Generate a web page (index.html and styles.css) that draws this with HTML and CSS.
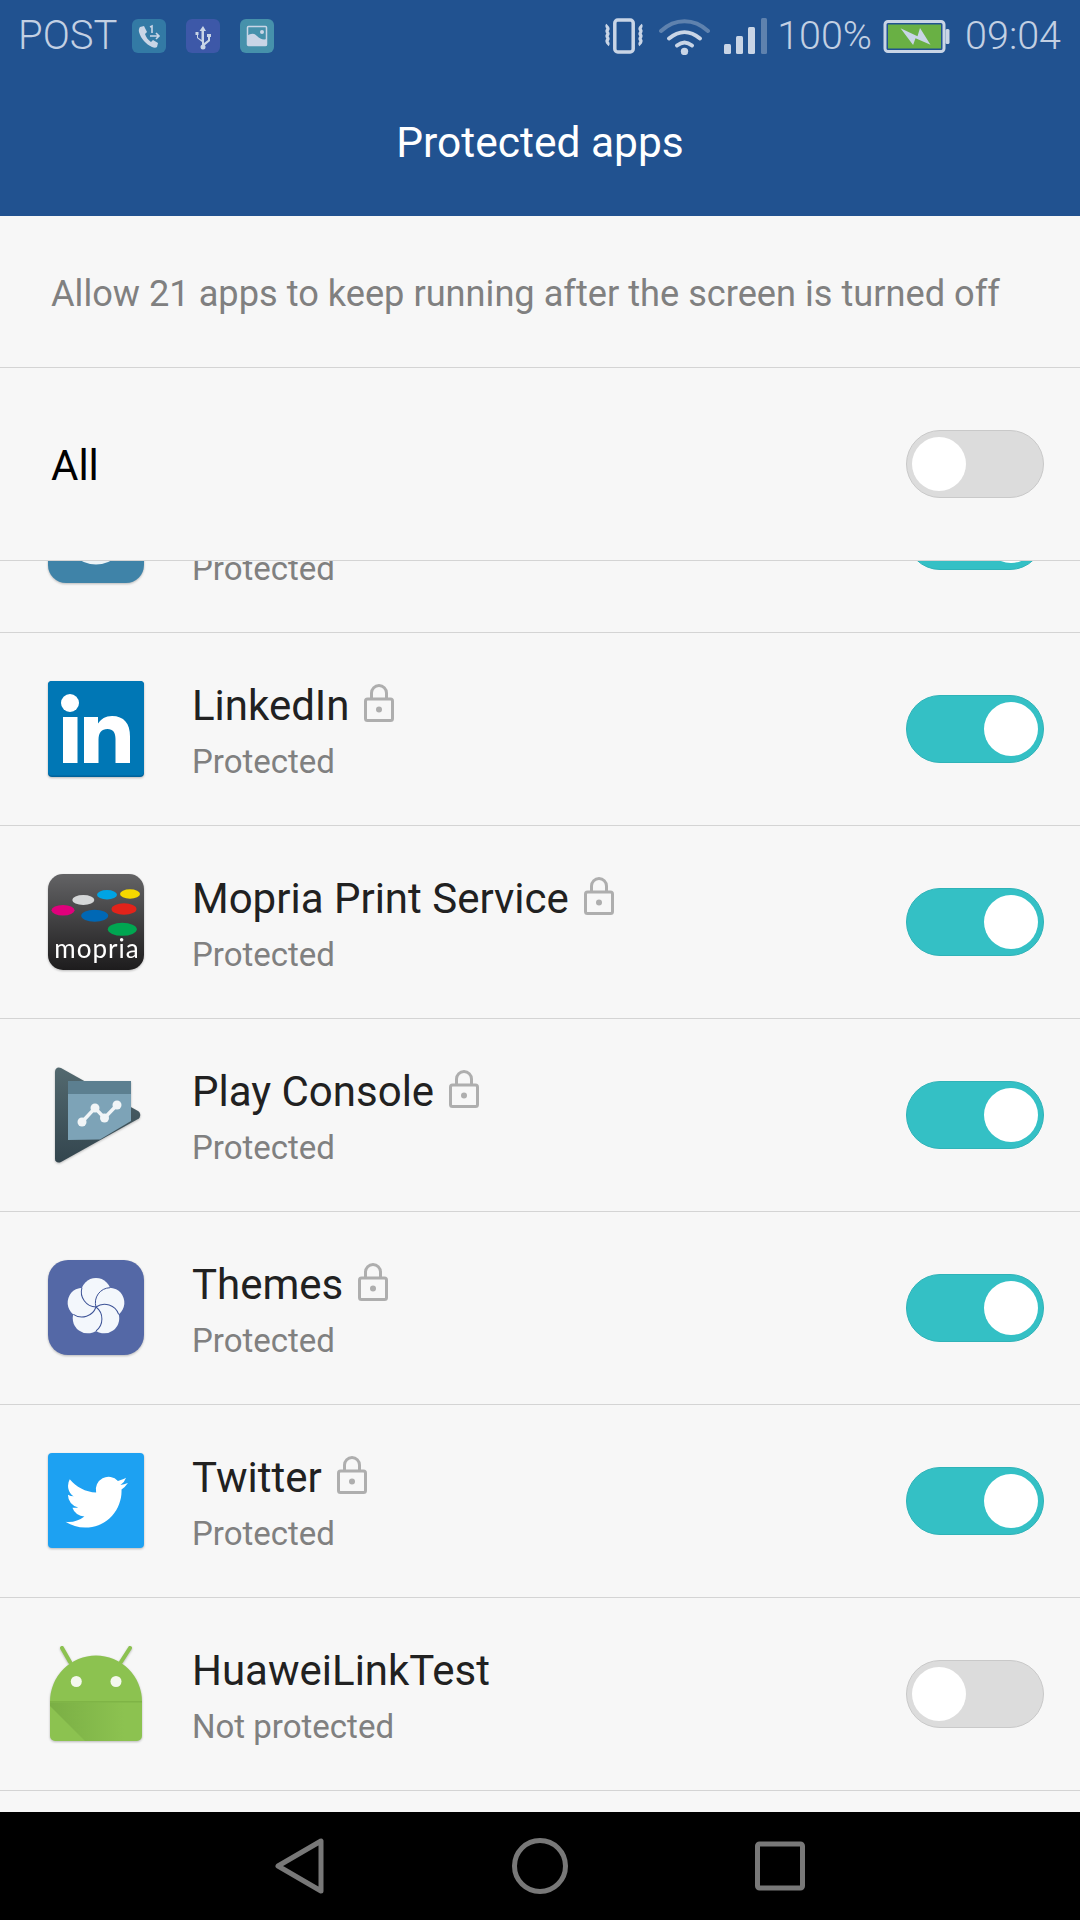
FILE: index.html
```html
<!DOCTYPE html>
<html lang="en">
<head>
    <meta charset="utf-8">
    <title>Protected apps</title>
    <link rel="stylesheet" href="styles.css">
</head>
<body>
<svg class="defs" width="0" height="0">
    <symbol id="lock" viewBox="0 0 30 38">
        <path d="M7.500 15V9a7.500 7.500 0 0 1 15 0v6" fill="none" stroke="#aeaeae" stroke-width="3"/>
        <rect x="1.500" y="15" width="27" height="21.500" rx="2" fill="none" stroke="#aeaeae" stroke-width="3"/>
        <circle cx="15" cy="25.500" r="3" fill="#aeaeae"/>
    </symbol>
</svg>

<div class="phone">
    <header class="header">
        <div class="statusbar">
            <div class="status-left">
                <span class="status-text">POST</span>
                <span class="tile tile-phone">
                    <svg width="34" height="34" viewBox="0 0 34 34">
                        <path d="M8 8l4-1 3 6-2 2c1 3 3 6 6 8l2-2 5 3-1 4c-1 1-3 1-5 0-6-3-11-8-13-15-.4-2 0-4 1-5z" fill="#c9d5e6"/>
                        <path d="M18 8l2-1v7M18 17h9M24 14l3 3-3 3" fill="none" stroke="#c9d5e6" stroke-width="1.600"/>
                    </svg>
                </span>
                <span class="tile tile-usb">
                    <svg width="34" height="34" viewBox="0 0 34 34">
                        <path d="M17 7l3 5h-2v12l4-3v-3h-1v-3h4v3h-1v4l-6 5v2h-2v-6l-5-4v-3h-1.500v-3h3v3h-.5v2.500l3.500 2.500V12h-2z" fill="#c9d5e6"/>
                        <circle cx="17" cy="28" r="2.500" fill="#c9d5e6"/>
                    </svg>
                </span>
                <span class="tile tile-image">
                    <svg width="34" height="34" viewBox="0 0 34 34">
                        <rect x="7.500" y="7.500" width="19" height="19" rx="1" fill="none" stroke="#c9d5e6" stroke-width="1.500"/>
                        <path d="M7 26V17c4-3 7-3 10 0s6 4 10 3v6.500z" fill="#c9d5e6"/>
                        <circle cx="22" cy="13" r="2" fill="#c9d5e6"/>
                    </svg>
                </span>
            </div>
            <div class="status-right">
                <svg class="st-vibrate" width="40" height="36" viewBox="0 0 40 36">
                    <rect x="10.800" y="2" width="18.400" height="32" rx="3" fill="none" stroke="#c9d5e6" stroke-width="3.500"/>
                    <path d="M3.500 7c-2 2 2 3 0 5s2 3 0 5 2 3 0 5 2 3 0 5M36.500 7c2 2-2 3 0 5s-2 3 0 5-2 3 0 5 -2 3 0 5" fill="none" stroke="#c9d5e6" stroke-width="3.200"/>
                </svg>
                <svg class="st-wifi" width="51" height="37" viewBox="0 0 51 37">
                    <path d="M2 13C16 0 35 0 49 13" fill="none" stroke="#5f82ae" stroke-width="4" stroke-linecap="round"/>
                    <path d="M10 20.500c10-8.500 21-8.500 31 0M18 27.500c5-4 10-4 15 0" fill="none" stroke="#c9d5e6" stroke-width="4" stroke-linecap="round"/>
                    <circle cx="25.500" cy="33.500" r="3.700" fill="#c9d5e6"/>
                </svg>
                <svg class="st-signal" width="43" height="37" viewBox="0 0 43 37">
                    <rect x="0" y="26" width="7" height="10" rx="1.500" fill="#c9d5e6"/>
                    <rect x="12" y="18" width="7" height="18" rx="1.500" fill="#c9d5e6"/>
                    <rect x="24" y="9" width="7" height="27" rx="1.500" fill="#c9d5e6"/>
                    <rect x="37" y="0" width="6" height="36" rx="1.500" fill="#5f82ae"/>
                </svg>
                <span class="status-text st-percent">100%</span>
                <svg class="st-battery" width="67" height="33" viewBox="0 0 66 33">
                    <rect x="1.500" y="1.500" width="59" height="30" rx="3" fill="#215290" stroke="#c9d5e6" stroke-width="3"/>
                    <rect x="4.500" y="4.500" width="53" height="24" fill="#69b044"/>
                    <rect x="62" y="9" width="4" height="15" rx="1.500" fill="#c9d5e6"/>
                    <path d="M17 8.300l17 8 2.500-8.300L47 24.700l-15-6.400-2.400 6.700z" fill="#c9d5e6"/>
                </svg>
                <span class="status-text st-time">09:04</span>
            </div>
        </div>
        <h1 class="title">Protected apps</h1>
    </header>

    <p class="intro">Allow 21 apps to keep running after the screen is turned off</p>

    <div class="all-row">
        <span class="all-label">All</span>
        <span class="toggle"></span>
    </div>

    <div class="list">
        <!-- scrolled up, only the bottom of this row shows -->
        <div class="row row-scrolled">
            <svg class="app-icon" viewBox="0 0 96 96">
                <rect width="96" height="95" rx="18" fill="#3f83a8"/>
                <circle cx="48" cy="46" r="28" fill="#2c3e46" stroke="#eef4f7" stroke-width="5"/>
            </svg>
            <div class="app-text">
                <div class="app-name">&nbsp;</div>
                <div class="app-status">Protected</div>
            </div>
            <span class="toggle toggle-on"></span>
        </div>

        <div class="row">
            <svg class="app-icon" viewBox="0 0 96 96">
                <rect width="96" height="96" rx="4" fill="#00629a"/>
                <rect width="96" height="94.500" rx="4" fill="#0077b5"/>
                <circle cx="22" cy="22" r="9" fill="#fff"/>
                <rect x="15" y="36" width="14.500" height="46" fill="#fff"/>
                <path d="M36 36h14v6.500c3-4.500 7.500-7.500 14-7.500 12 0 18 7.500 18 20.500V82H67.500V58c0-6.500-2.500-10-8-10-6 0-9 4-9 10.500V82H36z" fill="#fff"/>
            </svg>
            <div class="app-text">
                <div class="app-name">LinkedIn<svg class="lock"><use href="#lock"/></svg></div>
                <div class="app-status">Protected</div>
            </div>
            <span class="toggle toggle-on"></span>
        </div>

        <div class="row">
            <svg class="app-icon" viewBox="0 0 96 96">
                <defs>
                    <linearGradient id="mop" x1="0" y1="0" x2="0" y2="1">
                        <stop offset="0" stop-color="#636365"/>
                        <stop offset="1" stop-color="#1d1c1d"/>
                    </linearGradient>
                </defs>
                <rect width="96" height="96" rx="15" fill="url(#mop)"/>
                <ellipse cx="35.300" cy="26" rx="11" ry="5" fill="#d5d7d8"/>
                <ellipse cx="59" cy="20.700" rx="10" ry="4.700" fill="#00a4e4"/>
                <ellipse cx="82" cy="20" rx="10" ry="4.700" fill="#f5d800"/>
                <ellipse cx="15" cy="36.300" rx="11.500" ry="5.200" fill="#e0007c"/>
                <ellipse cx="76" cy="35" rx="12.500" ry="5.700" fill="#e2231a"/>
                <ellipse cx="46.700" cy="41.700" rx="13.500" ry="6" fill="#0068b5"/>
                <ellipse cx="74.300" cy="55.300" rx="14.500" ry="6.500" fill="#00a651"/>
                <text class="mopria-text" x="49" y="84" text-anchor="middle">mopria</text>
            </svg>
            <div class="app-text">
                <div class="app-name">Mopria Print Service<svg class="lock"><use href="#lock"/></svg></div>
                <div class="app-status">Protected</div>
            </div>
            <span class="toggle toggle-on"></span>
        </div>

        <div class="row">
            <svg class="app-icon" viewBox="0 0 96 96">
                <defs>
                    <linearGradient id="play" x1="0" y1="0" x2="0" y2="1">
                        <stop offset="0" stop-color="#53696f"/>
                        <stop offset="1" stop-color="#33454e"/>
                    </linearGradient>
                </defs>
                <path d="M7 5c0-4 3-5.500 6-4L90 44c3 2 3 6 0 8L13 95c-3 1.500-6 0-6-3z" fill="url(#play)"/>
                <path d="M20 27H83V54L52 72.500 20 73z" fill="#7da3b7"/>
                <rect x="20" y="14" width="63" height="13" fill="#5c7f90"/>
                <path d="M34 55l13-14 9.500 10L69 38" fill="none" stroke="#f1f5f7" stroke-width="3.500"/>
                <g fill="#f1f5f7">
                    <circle cx="34" cy="55" r="4.500"/>
                    <circle cx="47" cy="41" r="4.500"/>
                    <circle cx="56.500" cy="51" r="4.500"/>
                    <circle cx="69" cy="38" r="4.500"/>
                </g>
            </svg>
            <div class="app-text">
                <div class="app-name">Play Console<svg class="lock"><use href="#lock"/></svg></div>
                <div class="app-status">Protected</div>
            </div>
            <span class="toggle toggle-on"></span>
        </div>

        <div class="row">
            <svg class="app-icon" viewBox="0 0 96 96">
                <rect width="96" height="95" rx="20" fill="#5468a6"/>
                <g transform="translate(48 47)">
                    <g fill="#f3f7fc">
                        <circle cy="-14" r="15"/>
                        <circle cy="-14" r="15" transform="rotate(72)"/>
                        <circle cy="-14" r="15" transform="rotate(144)"/>
                        <circle cy="-14" r="15" transform="rotate(216)"/>
                        <circle cy="-14" r="15" transform="rotate(288)"/>
                    </g>
                    <g fill="none" stroke="#3c5296" stroke-width="1">
                        <path d="M0 0A15 15 0 0 1 14-19.300"/>
                        <path d="M0 0A15 15 0 0 1 14-19.300" transform="rotate(72)"/>
                        <path d="M0 0A15 15 0 0 1 14-19.300" transform="rotate(144)"/>
                        <path d="M0 0A15 15 0 0 1 14-19.300" transform="rotate(216)"/>
                        <path d="M0 0A15 15 0 0 1 14-19.300" transform="rotate(288)"/>
                    </g>
                </g>
            </svg>
            <div class="app-text">
                <div class="app-name">Themes<svg class="lock"><use href="#lock"/></svg></div>
                <div class="app-status">Protected</div>
            </div>
            <span class="toggle toggle-on"></span>
        </div>

        <div class="row">
            <svg class="app-icon" viewBox="0 0 96 96">
                <rect width="96" height="95" rx="4" fill="#1da1f2"/>
                <path transform="translate(17.500 18) scale(2.6)" d="M23.953 4.570a10 10 0 0 1-2.825.775 4.958 4.958 0 0 0 2.163-2.723c-.951.555-2.005.959-3.127 1.184a4.920 4.920 0 0 0-8.384 4.482C7.690 8.095 4.067 6.130 1.640 3.162a4.822 4.822 0 0 0-.666 2.475c0 1.710.870 3.213 2.188 4.096a4.904 4.904 0 0 1-2.228-.616v.060a4.923 4.923 0 0 0 3.946 4.827 4.996 4.996 0 0 1-2.212.085 4.936 4.936 0 0 0 4.604 3.417 9.867 9.867 0 0 1-6.102 2.105c-.390 0-.779-.023-1.170-.067a13.995 13.995 0 0 0 7.557 2.209c9.053 0 13.998-7.496 13.998-13.985 0-.210 0-.420-.015-.630A9.935 9.935 0 0 0 24 4.590z" fill="#fff"/>
            </svg>
            <div class="app-text">
                <div class="app-name">Twitter<svg class="lock"><use href="#lock"/></svg></div>
                <div class="app-status">Protected</div>
            </div>
            <span class="toggle toggle-on"></span>
        </div>

        <div class="row">
            <svg class="app-icon" viewBox="0 0 96 96">
                <defs>
                    <linearGradient id="fold" x1="0" y1="0" x2="1" y2="0">
                        <stop offset="0" stop-color="#76aa42" stop-opacity=".8"/>
                        <stop offset="1" stop-color="#76aa42" stop-opacity="0"/>
                    </linearGradient>
                </defs>
                <path d="M14 2l8 14M82 2l-9 14" stroke="#8cc250" stroke-width="4" stroke-linecap="round"/>
                <path d="M2 90V55.500a46 46 0 0 1 92 0V90a5 5 0 0 1-5 5H7a5 5 0 0 1-5-5z" fill="#8cc250"/>
                <path d="M2 55h92v1.500H2z" fill="#7fb446"/>
                <path d="M2 56.500H76V95H37L2 60z" fill="url(#fold)"/>
                <circle cx="28.300" cy="35.500" r="5.500" fill="#f4f8ee"/>
                <circle cx="68" cy="35.500" r="5.500" fill="#f4f8ee"/>
            </svg>
            <div class="app-text">
                <div class="app-name">HuaweiLinkTest</div>
                <div class="app-status">Not protected</div>
            </div>
            <span class="toggle"></span>
        </div>
    </div>

    <nav class="navbar">
        <svg width="60" height="60" viewBox="0 0 60 60">
            <path d="M8 30L51 5v50z" fill="none" stroke="#787878" stroke-width="5" stroke-linejoin="round"/>
        </svg>
        <svg width="60" height="60" viewBox="0 0 60 60">
            <circle cx="30" cy="30" r="25.500" fill="none" stroke="#787878" stroke-width="5"/>
        </svg>
        <svg width="60" height="60" viewBox="0 0 60 60">
            <rect x="7.500" y="8" width="45" height="44" rx="2" fill="none" stroke="#787878" stroke-width="5"/>
        </svg>
    </nav>
</div>
</body>
</html>
```

FILE: styles.css
```css
*{
    box-sizing: border-box;
}
html, body{
    margin: 0;
    padding: 0;
}
body{
    background: #f7f7f7;
    font-family: Roboto, "Liberation Sans", sans-serif;
}
.defs{
    position: absolute;
}
.phone{
    width: 1080px;
    height: 1920px;
    display: flex;
    flex-direction: column;
    overflow: hidden;
}

/* header */
.header{
    height: 216px;
    flex: none;
    background: #215290;
    display: flex;
    flex-direction: column;
}
.statusbar{
    height: 72px;
    flex: none;
    padding: 0 19px 0 18px;
    display: flex;
    align-items: center;
    justify-content: space-between;
}
.status-left, .status-right{
    display: flex;
    align-items: center;
}
.status-text{
    font-size: 40px;
    font-weight: 300;
    color: #c3d0e3;
    line-height: 1;
}
.tile{
    width: 34px;
    height: 34px;
    border-radius: 6px;
    margin-left: 20px;
    display: block;
}
.tile svg{
    display: block;
}
.tile-phone{
    margin-left: 15px;
    background: #337aa5;
}
.tile-usb{
    background: #3d58a8;
}
.tile-image{
    background: #4691ab;
}
.st-wifi, .st-signal{
    margin-left: 15px;
}
.st-signal{
    margin-left: 14px;
}
.st-percent{
    margin-left: 10px;
    font-size: 39.5px;
}
.st-battery{
    margin-left: 11px;
}
.st-time{
    margin-left: 15px;
    font-size: 39.5px;
}
.title{
    margin: 0;
    flex: 1;
    display: flex;
    align-items: center;
    justify-content: center;
    padding-bottom: 3px;
    font-size: 42.5px;
    font-weight: 400;
    color: #fff;
}

/* top rows */
.intro{
    margin: 0;
    height: 152px;
    flex: none;
    padding: 3px 0 0 51px;
    display: flex;
    align-items: center;
    border-bottom: 1px solid #d4d4d4;
    font-size: 36.2px;
    color: #808080;
}
.all-row{
    height: 193px;
    flex: none;
    padding: 0 36px 0 51px;
    display: flex;
    align-items: center;
    justify-content: space-between;
    border-bottom: 1px solid #d4d4d4;
}
.all-label{
    padding-top: 2px;
    font-size: 42px;
    color: #000;
}

/* list */
.list{
    flex: 1;
    overflow: hidden;
}
.row{
    height: 193px;
    padding: 0 36px 0 48px;
    display: flex;
    align-items: center;
    border-bottom: 1px solid #d4d4d4;
}
.row-scrolled{
    margin-top: -121px;
}
.app-icon{
    width: 96px;
    height: 96px;
    flex: none;
    filter: drop-shadow(0 1px 1px rgba(0, 0, 0, .25));
}
.app-text{
    flex: 1;
    margin-left: 48px;
    padding-top: 4px;
}
.app-name{
    display: flex;
    align-items: center;
    font-size: 42px;
    line-height: 56px;
    color: #212121;
}
.app-status{
    margin-top: 6px;
    font-size: 33px;
    line-height: 44px;
    color: #808080;
}
.lock{
    width: 30px;
    height: 38px;
    margin-left: 15px;
    margin-top: -6px;
}
.mopria-text{
    font-family: Lato, "Liberation Sans", sans-serif;
    font-size: 26px;
    letter-spacing: 1px;
    fill: #fff;
}

/* switch */
.toggle{
    width: 138px;
    height: 68px;
    flex: none;
    border-radius: 34px;
    border: 1px solid #c9c9c9;
    background: #dcdcdc;
    padding: 6px 5px;
    display: flex;
    justify-content: flex-start;
}
.toggle::after{
    content: "";
    width: 54px;
    height: 54px;
    border-radius: 50%;
    background: #fff;
}
.toggle-on{
    border-color: #2fb3b8;
    background: #34c0c5;
    justify-content: flex-end;
}

/* bottom bar */
.navbar{
    height: 108px;
    flex: none;
    background: #000;
    display: flex;
    align-items: center;
    justify-content: center;
    gap: 180px;
}
```
